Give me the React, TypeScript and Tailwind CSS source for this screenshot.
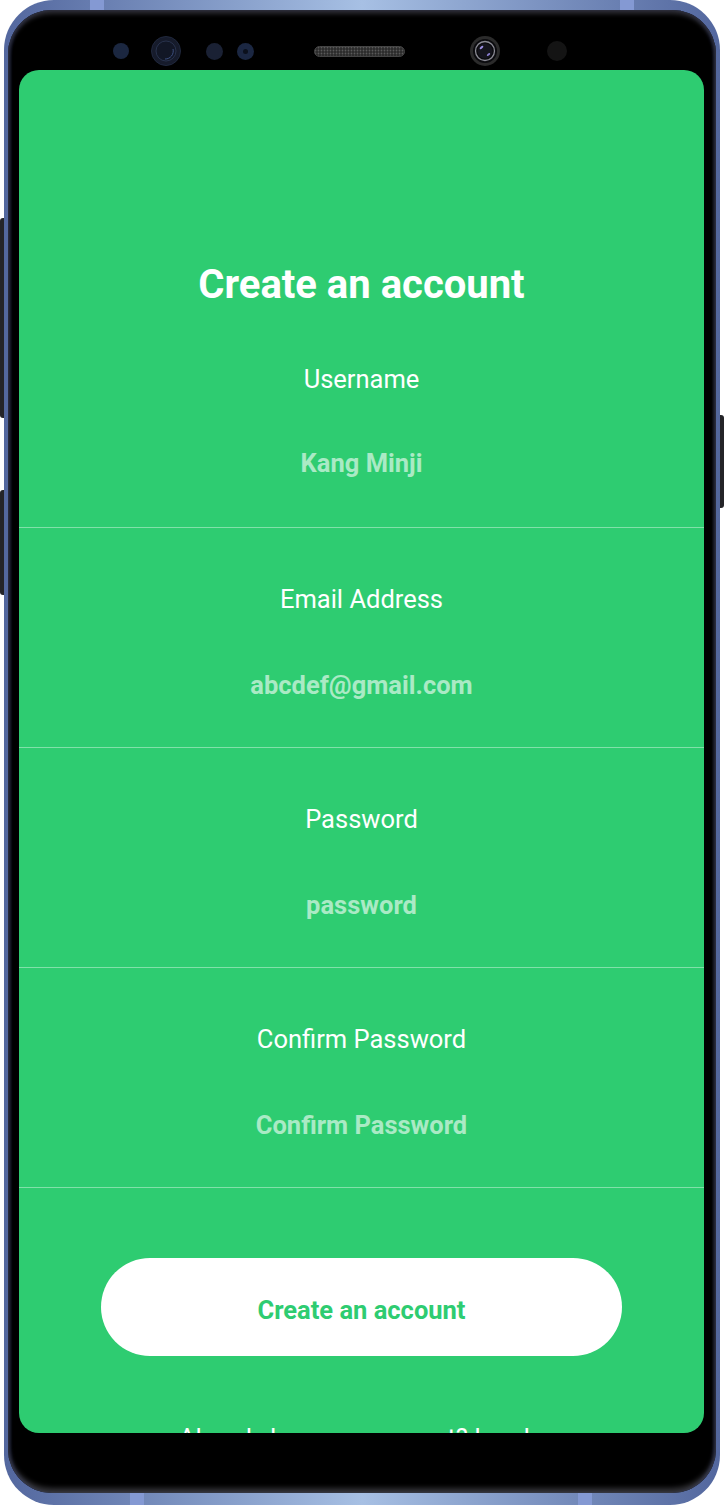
const fields = [
  { label: "Email Address", value: "abcdef@gmail.com" },
  { label: "Password", value: "password" },
  { label: "Confirm Password", value: "Confirm Password" },
];

const SpeakerGrill = () => (
  <svg width="91" height="11" viewBox="0 0 91 11">
    <defs>
      <pattern id="mesh" width="3" height="3" patternUnits="userSpaceOnUse">
        <rect width="3" height="3" fill="#2a2a2a" />
        <circle cx="1.5" cy="1.5" r="0.9" fill="#5a5a5a" />
      </pattern>
    </defs>
    <rect x="0.5" y="0.5" width="90" height="10" rx="5" fill="url(#mesh)" stroke="#444" />
  </svg>
);

const BigSensor = () => (
  <svg width="30" height="30" viewBox="0 0 30 30">
    <circle cx="15" cy="15" r="14.5" fill="#161b2b" stroke="#20283d" />
    <circle cx="15" cy="15" r="10" fill="#121726" stroke="#28324c" />
    <path d="M22 13 A8 8 0 0 1 14 23" fill="none" stroke="#3d5080" strokeWidth="1" />
  </svg>
);

const FrontCamera = () => (
  <svg width="30" height="30" viewBox="0 0 30 30">
    <circle cx="15" cy="15" r="15" fill="#2b2b2b" />
    <circle cx="15" cy="15" r="12" fill="#0b0b0e" />
    <circle cx="15" cy="15" r="9.5" fill="none" stroke="#8a8a94" strokeWidth="1.3" />
    <circle cx="15" cy="15" r="7.5" fill="#15151d" />
    <ellipse cx="11.5" cy="11.5" rx="2.2" ry="1.1" transform="rotate(-40 11.5 11.5)" fill="#9d90e6" />
    <ellipse cx="18.5" cy="18.5" rx="2" ry="1" transform="rotate(-40 18.5 18.5)" fill="#8d80d6" />
  </svg>
);

export default function App() {
  return (
    <div className="relative w-[724px] h-[1505px] bg-white overflow-hidden px-[4px] font-['Roboto',sans-serif]">
      {/* side buttons */}
      <div className="absolute left-0 top-[218px] w-[5px] h-[200px] rounded-l-[3px] bg-[#242428]" />
      <div className="absolute left-0 top-[490px] w-[5px] h-[105px] rounded-l-[3px] bg-[#242428]" />
      <div className="absolute right-0 top-[415px] w-[5px] h-[93px] rounded-r-[3px] bg-[#242428]" />

      {/* frame */}
      <div className="relative h-full rounded-[50px] bg-gradient-to-r from-[#53679e] via-[#a7c0e4] to-[#53679e] px-[4px] pt-[10px] pb-[12px]">
        {/* antenna bands */}
        <div className="absolute top-0 left-[86px] w-[14px] h-[10px] bg-[#8499d3]" />
        <div className="absolute top-0 left-[616px] w-[14px] h-[10px] bg-[#8499d3]" />
        <div className="absolute bottom-0 left-[126px] w-[14px] h-[12px] bg-[#8499d3]" />
        <div className="absolute bottom-0 left-[574px] w-[14px] h-[12px] bg-[#8499d3]" />

        <div className="h-full rounded-[44px] bg-black flex flex-col pl-[11px] pr-[12px] pb-[60px] shadow-[inset_0_4px_4px_rgba(70,70,80,0.6),inset_0_-5px_5px_rgba(110,110,120,0.45),inset_3px_0_3px_rgba(20,25,50,0.8),inset_-3px_0_3px_rgba(20,25,50,0.8)]">
          {/* sensor row */}
          <div className="h-[60px] flex items-center pt-[22px] shrink-0">
            <div className="ml-[94px] w-[16px] h-[16px] rounded-full bg-[#1b2740]" />
            <div className="ml-[22px] flex"><BigSensor /></div>
            <div className="ml-[25px] w-[17px] h-[17px] rounded-full bg-[#1a2134]" />
            <div className="ml-[14px] w-[17px] h-[17px] rounded-full bg-[#1b2742] flex items-center justify-center">
              <div className="w-[5px] h-[5px] rounded-full bg-[#0b101c]" />
            </div>
            <div className="ml-[60px] flex"><SpeakerGrill /></div>
            <div className="ml-[65px] flex"><FrontCamera /></div>
            <div className="ml-[47px] w-[20px] h-[20px] rounded-full bg-[#141414]" />
          </div>

          {/* screen */}
          <div className="flex-1 rounded-[20px] bg-[#2ecc71] overflow-hidden text-center text-white text-[25.5px] leading-[30px]">
            <h1 className="pt-[193px] text-[40px] leading-[44px] font-bold">Create an account</h1>

            <div className="border-b border-white/40 pt-[57px] pb-[49px]">
              <p>Username</p>
              <p className="mt-[54px] font-bold text-white/60">Kang Minji</p>
            </div>

            {fields.map((f) => (
              <div key={f.label} className="border-b border-white/40 pt-[56px] pb-[47px]">
                <p>{f.label}</p>
                <p className="mt-[56px] font-bold text-white/60">{f.value}</p>
              </div>
            ))}

            <button className="mt-[70px] mx-[82px] w-[521px] h-[98px] pt-[5px] rounded-full bg-white text-[#2ecc71] font-bold">
              Create an account
            </button>

            <p className="mt-[67px]">Already have an account? Log In</p>
          </div>
        </div>
      </div>
    </div>
  );
}
